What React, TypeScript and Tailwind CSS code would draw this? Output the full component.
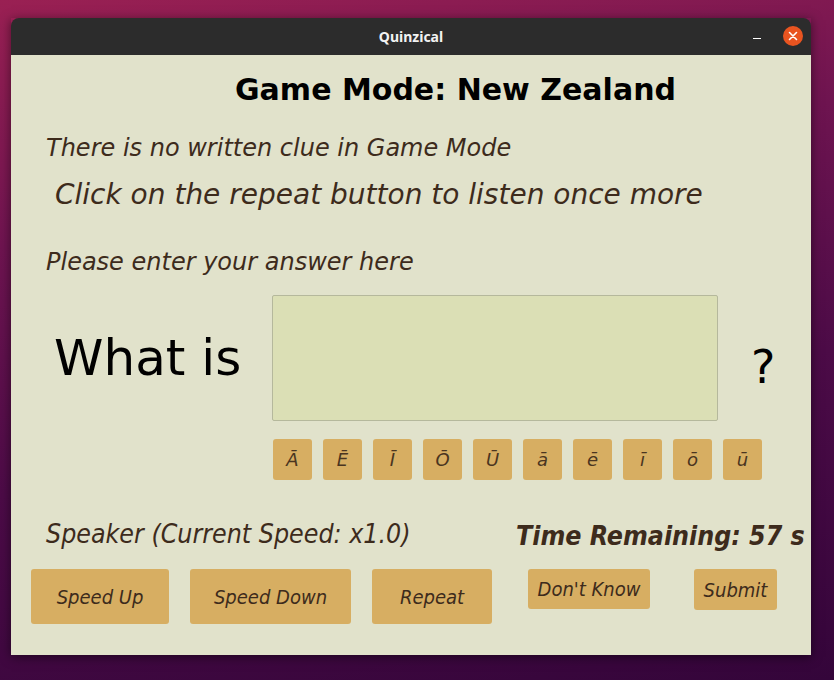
import React from 'react';

const accents = ['Ā', 'Ē', 'Ī', 'Ō', 'Ū', 'ā', 'ē', 'ī', 'ō', 'ū'];

export default function App() {
  return (
    <div className="relative h-[680px] w-[834px] overflow-hidden bg-[linear-gradient(170deg,#9a2053_0%,#6e1450_30%,#4c0b47_60%,#34053a_100%)] pl-[11px] pt-[18px] font-['DejaVu_Sans',sans-serif]">
      {/* window */}
      <div className="flex w-[800px] flex-col shadow-[0_2px_10px_rgba(0,0,0,0.5)]">
        {/* title bar */}
        <div className="relative flex h-[37px] items-center justify-center rounded-t-[8px] bg-[#2c2c2c]">
          <span className="font-['Noto_Sans',sans-serif] text-[14px] font-bold text-[#f2f2f2]">Quinzical</span>
          <div className="absolute right-[8px] top-[8px] flex items-center gap-[22px]">
            <span className="mt-[4px] block h-[1px] w-[8px] bg-white" />
            <span className="flex h-[20px] w-[20px] items-center justify-center rounded-full bg-[#e95420]">
              <svg width="10" height="10" viewBox="0 0 10 10">
                <path d="M1.5 1.5L8.5 8.5M8.5 1.5L1.5 8.5" stroke="white" strokeWidth="1.6" strokeLinecap="round" />
              </svg>
            </span>
          </div>
        </div>

        {/* content */}
        <div className="flex h-[600px] flex-col bg-[#e1e2cb] text-[#3d2b1c]">
          <h1 className="ml-[224px] mt-[17px] text-[30px] font-bold leading-[36px] text-black">Game Mode: New Zealand</h1>
          <p className="ml-[35px] mt-[24px] text-[24px] italic leading-[32px]">There is no written clue in Game Mode</p>
          <p className="ml-[44px] mt-[13px] text-[28px] italic leading-[36px]">Click on the repeat button to listen once more</p>
          <p className="ml-[35px] mt-[33px] text-[24px] italic leading-[32px]">Please enter your answer here</p>

          <div className="mt-[17px] flex items-center">
            <span className="ml-[43px] w-[218px] text-[50px] leading-[60px] text-black">What is</span>
            <div className="h-[126px] w-[446px] rounded-[2px] border border-[#b5b89c] bg-[#dbdfb5]" />
            <span className="ml-[33px] mt-[18px] text-[46px] leading-[60px] text-black">?</span>
          </div>

          <div className="ml-[262px] mt-[18px] flex gap-[11px]">
            {accents.map((a) => (
              <div
                key={a}
                className="flex h-[41px] w-[39px] items-center justify-center rounded-[3px] bg-[#d7ae62] text-[18px] italic text-[#4a3520]"
              >
                {a}
              </div>
            ))}
          </div>

          <div className="mt-[38px] flex items-start font-['DejaVu_Sans_Condensed','DejaVu_Sans',sans-serif] font-stretch-condensed">
            <span className="ml-[35px] w-[470px] text-[26.5px] italic leading-[32px]">Speaker (Current Speed: x1.0)</span>
            <span className="mt-[2px] whitespace-nowrap text-[26.5px] font-bold italic leading-[32px]">Time Remaining: 57 s</span>
          </div>

          <div className="mt-[17px] flex items-start font-['DejaVu_Sans_Condensed','DejaVu_Sans',sans-serif] text-[20px] italic font-stretch-condensed">
            <div className="ml-[20px] flex h-[55px] w-[138px] items-center justify-center rounded-[3px] bg-[#d7ae62]">Speed Up</div>
            <div className="ml-[21px] flex h-[55px] w-[161px] items-center justify-center rounded-[3px] bg-[#d7ae62]">Speed Down</div>
            <div className="ml-[21px] flex h-[55px] w-[120px] items-center justify-center rounded-[3px] bg-[#d7ae62]">Repeat</div>
            <div className="ml-[36px] flex h-[40px] w-[122px] items-center justify-center rounded-[3px] bg-[#d7ae62]">Don't Know</div>
            <div className="ml-[44px] flex h-[41px] w-[83px] items-center justify-center rounded-[3px] bg-[#d7ae62]">Submit</div>
          </div>
        </div>
      </div>
    </div>
  );
}
